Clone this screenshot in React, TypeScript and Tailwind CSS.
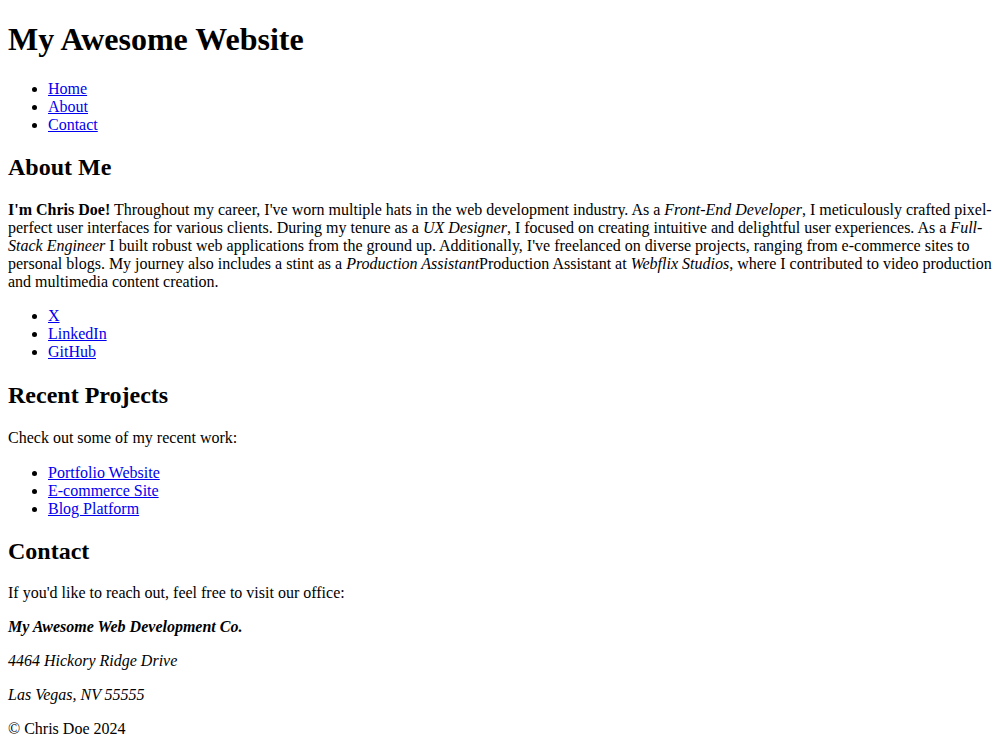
import React from "react";

const linkCls = "text-[#0000ee] underline";

function LinkList({ items, top = "mt-4" }: { items: string[]; top?: string }) {
  return (
    <ul className={`${top} mb-4 pl-10 list-disc`}>
      {items.map((t) => (
        <li key={t}>
          <a href="#" className={linkCls}>
            {t}
          </a>
        </li>
      ))}
    </ul>
  );
}

export default function App() {
  return (
    <div className="m-2 font-['Liberation_Serif',serif] text-[16px] leading-[normal] text-black bg-white">
      <header>
        <h1 className="text-[32px] font-bold my-[21.44px]">My Awesome Website</h1>
        <nav>
          <LinkList items={["Home", "About", "Contact"]} />
        </nav>
      </header>
      <main>
        <section>
          <h2 className="text-[24px] font-bold my-[19.92px]">About Me</h2>
          <p className="my-4">
            <strong className="font-bold">I'm Chris Doe!</strong> Throughout my career, I've worn multiple hats in the web
            development industry. As a <em className="italic">Front-End Developer</em>, I meticulously crafted
            pixel-perfect user interfaces for various clients. During my tenure as a{" "}
            <em className="italic">UX Designer</em>, I focused on creating intuitive and delightful user experiences. As
            a <em className="italic">Full-Stack Engineer</em> I built robust web applications from the ground up.
            Additionally, I've freelanced on diverse projects, ranging from e-commerce sites to personal blogs. My
            journey also includes a stint as a <em className="italic">Production Assistant</em>Production Assistant at{" "}
            <em className="italic">Webflix Studios</em>, where I contributed to video production and multimedia content
            creation.
          </p>
          <LinkList items={["X", "LinkedIn", "GitHub"]} />
        </section>
        <section>
          <h2 className="text-[24px] font-bold mt-[21px] mb-[19.92px]">Recent Projects</h2>
          <p className="my-4">Check out some of my recent work:</p>
          <LinkList items={["Portfolio Website", "E-commerce Site", "Blog Platform"]} top="mt-[17px]" />
        </section>
        <section>
          <h2 className="text-[24px] font-bold my-[19.92px]">Contact</h2>
          <p className="my-4">If you'd like to reach out, feel free to visit our office:</p>
          <address className="italic">
            <p className="my-4">
              <strong className="font-bold">My Awesome Web Development Co.</strong>
            </p>
            <p className="my-4">4464 Hickory Ridge Drive</p>
            <p className="my-4">Las Vegas, NV 55555</p>
          </address>
        </section>
      </main>
      <footer>
        <p className="my-4">© Chris Doe 2024</p>
      </footer>
    </div>
  );
}
